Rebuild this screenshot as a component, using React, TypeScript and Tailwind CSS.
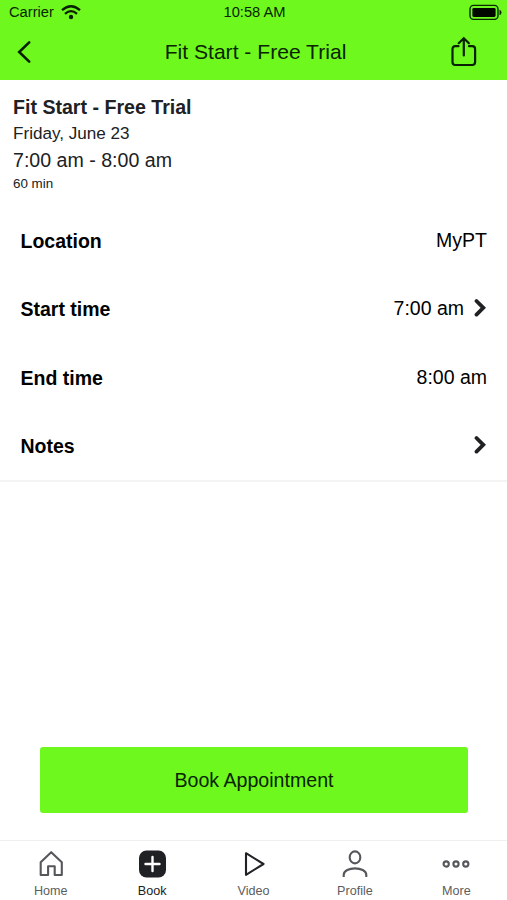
import type { ReactNode } from "react";

function Chevron() {
  return (
    <svg width="13" height="20" viewBox="0 0 13 20" fill="none">
      <path d="M2.5 3L9.3 9.8L2.5 16.6" stroke="#202124" strokeWidth="3.8" strokeLinecap="round" />
    </svg>
  );
}

function StatusBar() {
  return (
    <div className="grid h-6 grid-cols-3 items-center pl-[7px] pr-[5px] text-[14.7px] leading-6">
      <div className="flex items-center gap-[7px] pl-0.5">
        <span>Carrier</span>
        <svg width="20" height="15" viewBox="0 0 20 15" fill="none" stroke="#092000">
          <path d="M1 5.2Q10-2.8 19 5.2" strokeWidth="2.3" />
          <path d="M4 8.8Q10 3.4 16 8.8" strokeWidth="2.3" />
          <circle cx="10" cy="12" r="2.2" fill="#092000" stroke="none" />
        </svg>
      </div>
      <span className="text-center">10:58 AM</span>
      <svg className="justify-self-end" width="33" height="16" viewBox="0 0 33 16" fill="none">
        <rect x="1" y="1.4" width="28" height="14" rx="3.6" stroke="#0b2800" strokeWidth="1.4" />
        <rect x="3.4" y="3.9" width="23.2" height="9" rx="1.3" fill="#020800" />
        <path d="M30.5 5.7Q32.5 6.5 32.5 8.5Q32.5 10.5 30.5 11.3Z" fill="#0b2800" />
      </svg>
    </div>
  );
}

function Header() {
  return (
    <header className="h-20 bg-[#6ef81e] text-[#0a2400]">
      <StatusBar />
      <div className="flex h-14 items-center justify-between pl-4 pr-[29px]">
        <button className="w-[45px]" aria-label="Back">
          <svg width="16" height="24" viewBox="0 0 16 24" fill="none">
            <path d="M13.2 2.4L3.2 12L13.2 21.6" stroke="#092000" strokeWidth="2.6" strokeLinecap="round" />
          </svg>
        </button>
        <h1 className="text-[21.1px] leading-6">Fit Start - Free Trial</h1>
        <button aria-label="Share">
          <svg
            width="28"
            height="32"
            viewBox="0 0 28 32"
            fill="none"
            stroke="#092000"
            strokeWidth="2.2"
            strokeLinecap="round"
          >
            <path d="M8.5 10.2H5.2Q2.5 10.2 2.5 13.1V26Q2.5 29 5.2 29H22.3Q25.1 29 25.1 26V13.1Q25.1 10.2 22.3 10.2H19" />
            <path d="M13.8 19.4V2.8M8.7 7.2L13.8 2.3L18.9 7.2" />
          </svg>
        </button>
      </div>
    </header>
  );
}

interface RowProps {
  label: string;
  value?: string;
  arrow?: boolean;
}

function Row({ label, value, arrow }: RowProps) {
  return (
    <div className="flex h-[68.3px] items-center justify-between pl-[20.5px] pr-5 text-[19.5px] leading-6 text-black">
      <span className="font-bold">{label}</span>
      <div className="flex items-center gap-[10px] pb-0.5">
        {value && <span>{value}</span>}
        {arrow && <Chevron />}
      </div>
    </div>
  );
}

interface TabProps {
  label: string;
  active?: boolean;
  children: ReactNode;
}

function Tab({ label, active, children }: TabProps) {
  return (
    <button
      className={`flex flex-1 flex-col items-center pt-2 text-[12.6px] leading-4 ${active ? "text-[#202124]" : "text-[#5b5d60]"}`}
    >
      <svg width="30" height="30" viewBox="0 0 30 30" fill="none" stroke="#55575b" strokeWidth="2.1">
        {children}
      </svg>
      <span className="mt-1">{label}</span>
    </button>
  );
}

function TabBar() {
  return (
    <nav className="flex h-[60px] border-t border-[#f0f0f0]">
      <Tab label="Home">
        <path d="M4.7 13.2L15.2 3.2L25.8 13.2V26H18.7V17.3H12.1V26H4.7Z" strokeLinejoin="round" />
      </Tab>
      <Tab label="Book" active>
        <rect x="2" y="1.5" width="27" height="27" rx="7.5" fill="#202124" stroke="none" />
        <path d="M15.5 8V22M8.5 15H22.5" stroke="white" strokeWidth="2.4" strokeLinecap="round" />
      </Tab>
      <Tab label="Video">
        <path d="M7 4.2L24.5 15L7 25.8Z" stroke="#202124" strokeLinejoin="round" />
      </Tab>
      <Tab label="Profile">
        <ellipse cx="15" cy="8.4" rx="5.3" ry="6" />
        <path d="M3.7 28V26C3.7 17.2 26.3 17.2 26.3 26V28" />
      </Tab>
      <Tab label="More">
        <circle cx="5.2" cy="15" r="2.6" />
        <circle cx="15" cy="15" r="2.6" />
        <circle cx="24.8" cy="15" r="2.6" />
      </Tab>
    </nav>
  );
}

function App() {
  return (
    <div className="flex h-[900px] w-[507px] flex-col overflow-hidden bg-white font-['Liberation_Sans',Arial,sans-serif]">
      <Header />
      <main className="flex flex-1 flex-col">
        <section className="h-[127px] px-[13px] pt-[15px] text-[#202124]">
          <h2 className="text-[19.6px] font-bold leading-6">Fit Start - Free Trial</h2>
          <p className="mt-0.5 text-[17.1px] leading-[26px]">Friday, June 23</p>
          <p className="text-[19.6px] leading-[26px]">7:00 am - 8:00 am</p>
          <p className="text-[13.4px] leading-[22px]">60 min</p>
        </section>
        <section className="border-b-2 border-[#f4f4f4]">
          <Row label="Location" value="MyPT" />
          <Row label="Start time" value="7:00 am" arrow />
          <Row label="End time" value="8:00 am" />
          <Row label="Notes" arrow />
        </section>
        <div className="mt-auto px-10 pb-[27px]">
          <button className="h-[66px] w-[428px] rounded-[3px] bg-[#6ef81e] pt-0.5 text-[19.6px] text-[#0a2400]">
            Book Appointment
          </button>
        </div>
      </main>
      <TabBar />
    </div>
  );
}

export default App;
